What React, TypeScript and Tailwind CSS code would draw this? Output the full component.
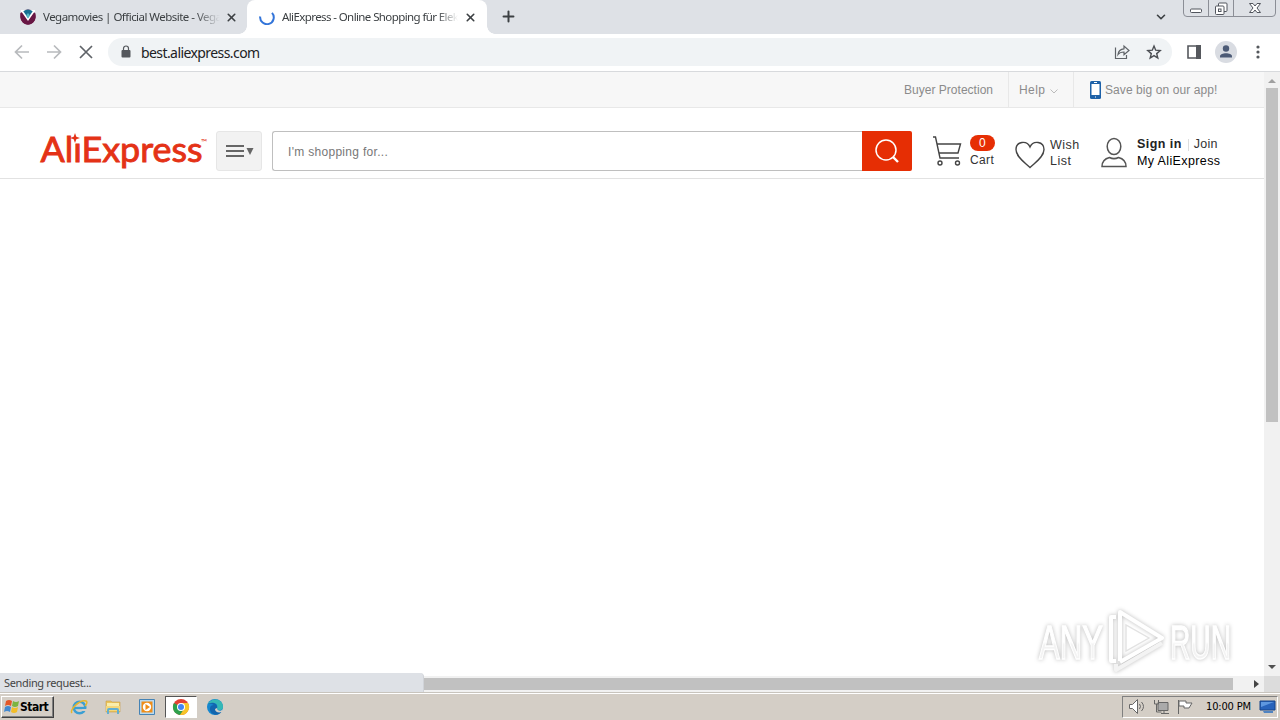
import type { ReactNode } from "react";
import { ChevronDown, Plus, X } from "lucide-react";

function VegaIcon() {
  return (
    <svg width="16" height="16" viewBox="0 0 16 16" className="shrink-0">
      <circle cx="8" cy="8" r="7.6" fill="#6e1743" />
      <path d="M1 1h14v4L8 13 1 5z" fill="#fff" />
      <path d="M3.3 2.2Q8-1 12.7 2.2L8 9z" fill="#176f91" />
      <path d="M0 5c1-2 1.500-2 2.200-1.200L8 12l5.800-8.200C15 3 15.500 4 15.700 6 16 12 12 15.700 8 15.700S0 12 .2 5z" fill="#681744" />
      <path d="m8 4 2 2.500L8 9.500 6 6.500z" fill="#54b9c5" />
    </svg>
  );
}

function WindowControls() {
  return (
    <svg width="97" height="18" viewBox="0 0 97 18" fill="none" className="shrink-0">
      <path d="M.5 0v13q0 3.500 3.500 3.500h85q3.500 0 3.500-3.500V0M25.500 0v16M50.500 0v16" stroke="#8b8e96" />
      <rect x="7.500" y="9" width="11" height="3.500" rx="1" fill="#fff" stroke="#51555d" />
      <rect x="35.500" y="3" width="8.500" height="8.500" rx="1" fill="#fff" stroke="#51555d" />
      <rect x="32.500" y="6" width="8.500" height="8.500" rx="1" fill="#fff" stroke="#51555d" />
      <rect x="35.500" y="9" width="2.500" height="2.500" stroke="#51555d" />
      <path d="M66.500 3.500h3.500l2 2.500 2-2.500h3.500L74 8l3.500 4.500H74L72 10l-2 2.500h-3.500L70 8z" fill="#fff" stroke="#51555d" />
    </svg>
  );
}

function TabStrip() {
  return (
    <div className="flex h-[34px] bg-[#dee1e6] text-[11.5px] text-[#3c4043]">
      <div className="flex h-[34px] w-[247px] items-center pl-5 pr-2">
        <VegaIcon />
        <div className="ml-[7px] w-[177px] whitespace-nowrap tracking-[-0.53px] [mask-image:linear-gradient(to_right,black_86%,transparent)]">
          Vegamovies | Official Website - Vega
        </div>
        <X size={13} strokeWidth={3} className="ml-[5px] shrink-0" />
      </div>
      <div className="relative flex h-[34px] w-[240px] items-center rounded-t-lg bg-white pl-3">
        <span className="absolute -left-2 bottom-0 size-2 bg-[radial-gradient(circle_at_0_0,#dee1e6_7.500px,white_8px)]" />
        <span className="absolute -right-2 bottom-0 size-2 bg-[radial-gradient(circle_at_100%_0,#dee1e6_7.500px,white_8px)]" />
        <svg width="16" height="16" viewBox="0 0 16 16" fill="none" className="shrink-0">
          <path d="M1.200 7.500A6.800 6.800 0 1 0 13 3.800" stroke="#3274d9" strokeWidth="2" />
        </svg>
        <div className="ml-[7px] w-[176px] whitespace-nowrap tracking-[-0.6px] [mask-image:linear-gradient(to_right,black_88%,transparent)]">
          AliExpress - Online Shopping für Elek
        </div>
        <X size={13} strokeWidth={3} className="ml-[6px] shrink-0" />
      </div>
      <Plus size={17} strokeWidth={2.8} className="ml-[13px] mt-[8px]" />
      <ChevronDown size={14} strokeWidth={2.8} className="ml-auto mt-[10px]" />
      <div className="ml-[15px]">
        <WindowControls />
      </div>
    </div>
  );
}

function Toolbar() {
  return (
    <div className="flex h-[38px] items-center border-b border-[#d8dadd] bg-white pb-[2px] pl-[14px]">
      <svg width="80" height="16" viewBox="0 0 80 16" fill="none" strokeWidth="1.700" className="shrink-0">
        <path d="M15 8H2M8 1.500 1.500 8 8 14.500M33 8h13M40 1.500 46.500 8 40 14.500" stroke="#b8babd" />
        <path d="m66 2 12 12M78 2 66 14" stroke="#5f6368" />
      </svg>
      <div className="ml-[14px] flex h-[28px] w-[1064px] items-center rounded-full bg-[#f0f3f5] pl-[13px] pr-[10px]">
        <svg width="10" height="14" viewBox="0 0 10 14" fill="none">
          <rect x=".5" y="5" width="9" height="7.500" rx="1" fill="#55585d" />
          <path d="M2.500 6V3.500a2.500 2.500 0 0 1 5 0V6" stroke="#55585d" strokeWidth="1.200" />
        </svg>
        <span className="ml-[10px] mt-px text-[14px] tracking-[-0.58px] text-[#202124]">best.aliexpress.com</span>
        <svg width="16" height="16" viewBox="0 0 16 16" fill="none" stroke="#5f6368" strokeWidth="1.200" className="ml-auto">
          <path d="M1.500 3.500v11h11V11M4 10.500c.5-4 2.500-5.500 6-5.700V2l5 4.500-5 4.300V8c-3 0-4.500.5-6 2.500z" />
        </svg>
        <svg width="16" height="16" viewBox="0 0 16 16" fill="none" stroke="#4b4e53" strokeWidth="1.400" className="ml-4">
          <path d="m8 2 1.700 4.200 4.500.4-3.500 3 1.100 4.400L8 11.600 4.200 14l1.100-4.400-3.500-3 4.500-.4z" />
        </svg>
      </div>
      <svg width="14" height="14" viewBox="0 0 14 14" className="ml-[15px] shrink-0">
        <path d="M1 1h12v12H1z" fill="none" stroke="#55585d" strokeWidth="1.600" />
        <path d="M9 0h5v14H9z" fill="#55585d" />
      </svg>
      <svg width="22" height="22" viewBox="0 0 22 22" className="ml-[14px] shrink-0">
        <circle cx="11" cy="11" r="11" fill="#d9dce2" />
        <circle cx="11" cy="7.500" r="3.200" fill="#4d5b76" />
        <path d="M5 16.500v-1.300c0-4 12-4 12 0v1.300z" fill="#4d5b76" />
      </svg>
      <svg width="4" height="16" viewBox="0 0 4 16" fill="#55585d" className="ml-[19px]">
        <circle cx="2" cy="3" r="1.600" />
        <circle cx="2" cy="8" r="1.600" />
        <circle cx="2" cy="13" r="1.600" />
      </svg>
    </div>
  );
}

function TopBar() {
  return (
    <div className="flex h-[36px] border-b border-[#e8e8e8] bg-[#f7f7f7] pt-px text-[12px] leading-[35px] text-[#8b8b8b]">
      <div className="ml-[904px] w-[104px] whitespace-nowrap tracking-[0.02px]">Buyer Protection</div>
      <div className="-mt-px flex w-[66px] items-center border-x border-[#e8e8e8] pl-[10px] pt-px tracking-[0.4px]">
        Help
        <svg width="8" height="5" viewBox="0 0 8 5" fill="none" stroke="#bbb" className="ml-[5px] mt-[2px]">
          <path d="m.5.5 3.500 3.500L7.500.5" />
        </svg>
      </div>
      <div className="flex items-center whitespace-nowrap pl-4 tracking-[0.08px]">
        <svg width="11" height="18" viewBox="0 0 11 18" className="mr-[4px]">
          <rect width="11" height="18" rx="1.500" fill="#1d61a8" />
          <path d="M1.500 3h8v11h-8z" fill="#fff" />
          <path d="M4 1.500h3M5 16h1" stroke="#fff" />
        </svg>
        Save big on our app!
      </div>
    </div>
  );
}

function Logo() {
  return (
    <svg width="168" height="44" viewBox="0 0 168 44" className="shrink-0 overflow-visible font-[Lato]" fill="#e43216">
      <text x="0.5" y="31" fontSize="35" stroke="#e43216" strokeWidth=".9" textLength="162" lengthAdjust="spacingAndGlyphs">
        AlıExpress
      </text>
      <path d="m35 2 1.300 3.700L40 7l-3.700 1.300L35 12l-1.300-3.700L30 7l3.700-1.300z" />
      <text x="161" y="14" fontSize="8">™</text>
    </svg>
  );
}

function Header() {
  return (
    <div className="flex h-[71px] border-b border-[#e2e2e2] pl-10 pt-[23px] text-[12px] leading-4 text-[#333]">
      <Logo />
      <button className="ml-[8px] flex h-10 w-[46px] items-center rounded-[3px] border border-[#e6e6e6] bg-[#f2f2f2] pl-[9px]">
        <svg width="29" height="14" viewBox="0 0 29 14">
          <path d="M0 2h18M0 7h18M0 12h18" stroke="#666" strokeWidth="2" />
          <path d="M20.500 4h7L24 11z" fill="#666" />
        </svg>
      </button>
      <div className="ml-[10px] flex h-10 w-[590px] items-center rounded-l-[3px] border border-r-0 border-[#bfbfbf] pl-[15px] pt-[2px] tracking-[0.3px] text-[#777]">
        I'm shopping for...
      </div>
      <button className="flex h-10 w-[50px] items-center justify-center rounded-r-[2px] bg-[#e62e04]">
        <svg width="26" height="26" viewBox="0 0 26 26" fill="none" stroke="#fff">
          <circle cx="12" cy="12" r="10" strokeWidth="1.500" />
          <path d="m19 19 5 5" strokeWidth="2.400" />
        </svg>
      </button>
      <svg width="30" height="32" viewBox="0 0 30 32" fill="none" stroke="#444" strokeWidth="1.400" className="ml-[21px] mt-[4px]">
        <path d="M0 2h2.500l4.500 21h19M4 9h23.500L25 18H6" />
        <circle cx="7" cy="28" r="2" />
        <circle cx="24.500" cy="28" r="2" />
      </svg>
      <div className="ml-[7px] w-[26px] tracking-[0.35px]">
        <div className="mt-[4px] h-4 w-[25px] rounded-full bg-[#e62e04] text-center text-white">0</div>
        <div className="mt-px">Cart</div>
      </div>
      <svg width="30" height="30" viewBox="0 0 30 30" fill="none" stroke="#444" strokeWidth="1.400" className="ml-[19px] mt-[9px]">
        <path d="M15 27.500C10 22.500 1 17 1 9.500 1 1 12 0 15 7 18 0 29 1 29 9.500 29 17 20 22.500 15 27.500z" />
      </svg>
      <div className="ml-[5px] mt-[6px] w-[34px] text-[12.500px] tracking-[0.5px]">
        Wish
        <br />
        List
      </div>
      <svg width="26" height="32" viewBox="0 0 26 32" fill="none" stroke="#555" strokeWidth="1.500" className="ml-[17px] mt-[6px]">
        <ellipse cx="13" cy="9.500" rx="6.800" ry="8" />
        <path d="M1 29.500c0-5 3.500-8 7.500-9 3 1.500 6 1.500 9 0 4 1 7.500 4 7.500 9z" />
      </svg>
      <div className="ml-[10px] mt-[5px] whitespace-nowrap text-[12.500px] leading-[17px]">
        <div className="flex items-center">
          <b className="tracking-[0.45px] text-[#222]">Sign in</b>
          <span className="ml-[6px] mr-[5px] h-3 w-px bg-[#ddd]" />
          <span className="tracking-[0.2px]">Join</span>
        </div>
        <div className="tracking-[0.38px] text-black">My AliExpress</div>
      </div>
    </div>
  );
}

function Watermark() {
  return (
    <svg
      width="200"
      height="68"
      viewBox="0 0 200 68"
      className="absolute left-[1036px] top-[535px] overflow-visible font-['Liberation_Sans']"
      fill="none"
      stroke="#fff"
      strokeWidth="1.400"
    >
      <defs>
        <linearGradient id="fade" x1="0" y1="0" x2="0" y2="1">
          <stop offset="0.5" stopColor="#fff" />
          <stop offset="0.55" stopColor="#f3f3f3" />
        </linearGradient>
      </defs>
      <g fill="url(#fade)" fontSize="49" className="drop-shadow-[0_0_2px_#bbb]">
        <text x="3" y="52" textLength="64" lengthAdjust="spacingAndGlyphs">ANY</text>
        <text x="134" y="52" textLength="61" lengthAdjust="spacingAndGlyphs">RUN</text>
      </g>
      <g strokeWidth="4" strokeLinejoin="round" className="drop-shadow-[0_0_2px_#bbb]">
        <path d="M84 54V5l42 26-42 24" />
        <path d="M80 10h-5v44h5" />
        <path d="M80 57v6l46-27" stroke="#f3f3f3" />
      </g>
      <path d="M90 18v26l23-13z" fill="#fff" stroke="#e2e2e2" />
    </svg>
  );
}

function Viewport() {
  return (
    <div className="relative flex h-[604px]">
      <div className="w-[1264px] shrink-0 font-['Liberation_Sans',Arial,sans-serif]">
        <TopBar />
        <Header />
        <Watermark />
      </div>
      <div className="flex w-4 shrink-0 flex-col items-center bg-[#f1f1f1]">
        <svg width="8" height="4" viewBox="0 0 8 4" fill="#a0a0a0" className="mt-[7px]">
          <path d="m0 4 4-4 4 4z" />
        </svg>
        <div className="mt-[5px] h-[334px] w-3 bg-[#c1c1c1]" />
        <svg width="8" height="4" viewBox="0 0 8 4" fill="#505050" className="mb-[7px] mt-auto">
          <path d="m0 0 4 4 4-4z" />
        </svg>
      </div>
    </div>
  );
}

function StatusRow() {
  return (
    <div className="flex h-4 bg-[#f1f1f1]">
      <div className="-mt-[3px] h-[19px] w-[424px] rounded-tr-[4px] border-r border-[#d0d3d8] bg-[#dee1e6] pl-1 text-[11px] leading-[20px] tracking-[-0.35px] text-[#444]">
        Sending request...
      </div>
      <div className="mt-[2px] h-3 w-[809px] bg-[#c1c1c1]" />
      <svg width="5" height="8" viewBox="0 0 5 8" fill="#444" className="ml-[21px] mt-1">
        <path d="m0 0 5 4-5 4z" />
      </svg>
      <div className="ml-auto w-4 bg-[#dcdcdc]" />
    </div>
  );
}

function WindowsFlag() {
  return (
    <svg width="17" height="17" viewBox="0 0 17 17">
      <path d="M3 3q3-2 6 0L8 8Q5 6 2 8z" fill="#e45728" />
      <path d="M10 3q3 2 6 0l-1 5q-3 2-6 0z" fill="#7cb440" />
      <path d="M2 9q3-2 6 0l-1 5q-3-2-6 0z" fill="#4389d0" />
      <path d="M9 9q3 2 6 0l-1 5q-3 2-6 0z" fill="#f3bd28" />
    </svg>
  );
}

function Launch({ active, children }: { active?: boolean; children: ReactNode }) {
  return (
    <div
      className={
        active
          ? "flex h-[22px] w-8 items-center justify-center border border-b-white border-l-[#555] border-r-white border-t-[#555] bg-white"
          : "flex h-[22px] w-8 items-center justify-center"
      }
    >
      <svg width="18" height="18" viewBox="0 0 18 18" className="shrink-0">
        {children}
      </svg>
    </div>
  );
}

function Taskbar() {
  return (
    <div className="flex h-7 items-center border-t border-[#c8c4bd] bg-[#d4cec6] pl-px pr-[2px] shadow-[inset_0_1px_0_#fff]">
      <button className="flex h-[22px] w-[53px] items-center border border-b-[#404040] border-l-white border-r-[#404040] border-t-white pl-px font-[DejaVu_Sans_Condensed] text-[12px] font-bold tracking-[-0.5px] text-black shadow-[inset_-1px_-1px_0_#808080]">
        <WindowsFlag />
        <span className="mt-px">Start</span>
      </button>
      <div className="ml-[9px] flex gap-[2px]">
        <Launch>
          <circle cx="9.500" cy="9.500" r="5.800" fill="none" stroke="#3b9fd3" strokeWidth="2.500" />
          <path d="M4 10h11" stroke="#3b9fd3" strokeWidth="2.300" />
          <path d="M12 12h5" stroke="#d4cec6" strokeWidth="2" />
          <path d="M2 15C-1 12 10 1 16 3c2 1 0 4-1 5" fill="none" stroke="#e5b62d" strokeWidth="1.500" />
        </Launch>
        <Launch>
          <path d="M2 3h5l1 1h8v10H2z" fill="#ebc35b" stroke="#c6a04b" strokeWidth=".6" />
          <path d="M3 5h12v4H3z" fill="#f9edab" />
          <path d="M2 8h14v5H2z" fill="#f4d77a" />
          <path d="M4 16v-4q0-1 1-1h8q1 0 1 1v4" fill="none" stroke="#61afd2" strokeWidth="2" />
        </Launch>
        <Launch>
          <path d="M1.500 1.500h15v15h-15z" fill="#b9d9ef" stroke="#4583b5" />
          <path d="M3.500 3.500h11v11h-11z" fill="#ef8d18" />
          <circle cx="9" cy="9" r="4.200" fill="#fff" />
          <path d="m7.500 6 4.500 3-4.500 3z" fill="#ef8d18" />
        </Launch>
        <Launch active>
          <circle cx="9" cy="9" r="8" fill="#e34133" />
          <path d="M9 9 2 5a8 8 0 0 0 6 12l5-7z" fill="#2da14c" />
          <path d="M9 5h7a8 8 0 0 1-8 12l4-6z" fill="#f7c529" />
          <circle cx="9" cy="9" r="4" fill="#fff" />
          <circle cx="9" cy="9" r="3" fill="#4285f4" />
        </Launch>
        <Launch>
          <circle cx="9" cy="9" r="8" fill="#1687cf" />
          <path d="M2 6C5-1 17 0 17 9c0 4-6 4-6 1 1-2 0-5-4-5-2 0-4 1-5 1z" fill="#35b8b5" />
          <path d="M2 6c5-3 10 0 9 4-1 4 2 5 5 3-4 7-13 3-12-3 0-2 2-3 4-3-3-2-5-1-6-1z" fill="#1265ae" />
          <path d="M11 10c0 3 4 4 6 1l-1 3c-4 1-7 0-7-3z" fill="#d4cec6" />
        </Launch>
      </div>
      <div className="ml-auto flex h-[22px] w-[156px] items-center border border-b-white border-l-[#808080] border-r-white border-t-[#808080] pl-[6px] font-['DejaVu_Sans_Condensed'] text-[11px] text-black">
        <svg width="66" height="18" viewBox="0 0 66 18" fill="#fff" stroke="#666" className="shrink-0">
          <path d="M.5 6.500h3l5-5v14l-5-5h-3z" />
          <path d="M10.500 6q2 2.500 0 5M12.500 4q4 4.500 0 9" fill="none" />
          <path d="M29 4.500h10v8H29z" fill="#aaa" />
          <path d="M32 15.500h8M35 13v2M25.500 2v4h4V2M27.500 6v8h5" fill="none" />
          <path d="M49.500 2v14M50 3h7v2h6l-3 5h-5V8h-5z" />
        </svg>
        <span className="ml-[11px] mt-px whitespace-nowrap tracking-[-0.15px]">10:00 PM</span>
        <svg width="17" height="15" viewBox="0 0 17 15" className="ml-auto mr-px shrink-0">
          <path d="M1 2h15v9H1z" fill="#2863bb" stroke="#174488" />
          <path d="M2 3h13L2 8z" fill="#5e97df" />
          <path d="M4 12h10v2H5z" fill="#5084c2" />
        </svg>
      </div>
    </div>
  );
}

export default function App() {
  return (
    <div className="flex h-[720px] w-[1280px] flex-col overflow-hidden bg-white font-['Noto_Sans',Tahoma,sans-serif]">
      <TabStrip />
      <Toolbar />
      <Viewport />
      <StatusRow />
      <Taskbar />
    </div>
  );
}
